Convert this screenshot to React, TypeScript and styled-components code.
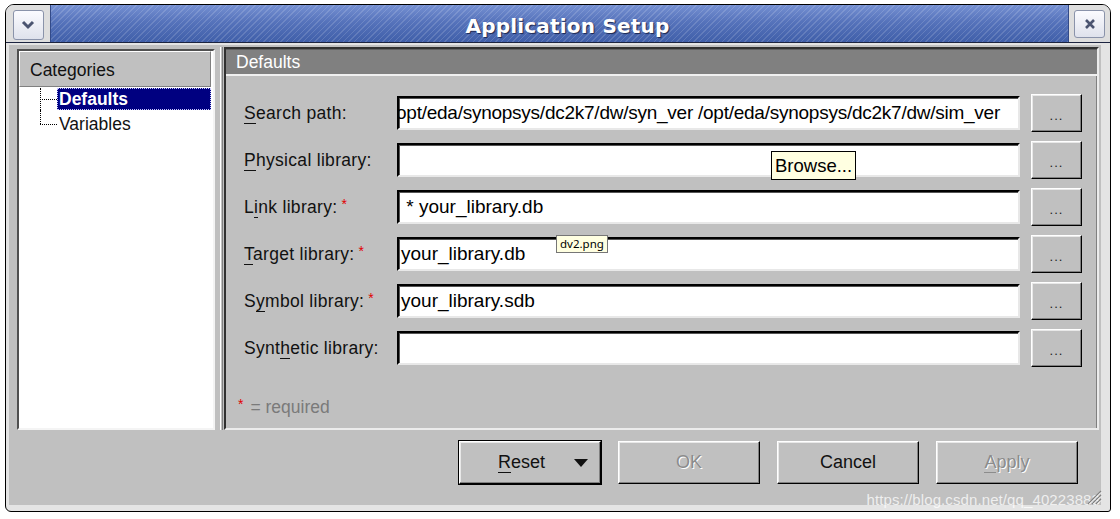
import React from "react";
import styled, { createGlobalStyle } from "styled-components";

const GlobalStyle = createGlobalStyle`
  html, body {
    margin: 0;
    padding: 0;
    background: #ffffff;
  }
  body {
    font-family: "Liberation Sans", Arial, sans-serif;
    color: #000;
  }
`;

const Window = styled.div`
  position: relative;
  box-sizing: border-box;
  width: 1106px;
  height: 508px;
  margin: 4px 0 0 5px;
  border: 1px solid #000;
  border-radius: 9px 9px 3px 6px;
  background: #e4e4e4;
  display: flex;
  flex-direction: column;
  overflow: hidden;
`;

const TitleBar = styled.div`
  height: 37px;
  display: flex;
  border-bottom: 1px solid #1c2440;
  background: #dedede;
`;

const TitleSide = styled.div<{ $w: number }>`
  width: ${(p) => p.$w}px;
  display: flex;
  align-items: flex-start;
  justify-content: center;
  padding-top: 5px;
  box-sizing: border-box;
`;

const FrameButton = styled.div<{ $w: number; $h: number }>`
  width: ${(p) => p.$w}px;
  height: ${(p) => p.$h}px;
  box-sizing: border-box;
  border: 1px solid #8a93aa;
  border-radius: 3px;
  background: linear-gradient(#fbfbff, #dfe2ec);
  display: flex;
  align-items: center;
  justify-content: center;
`;

const TitleArea = styled.div`
  flex: 1;
  display: flex;
  align-items: center;
  justify-content: center;
  padding: 5px 0 0 16px;
  background: repeating-linear-gradient(
      135deg,
      rgba(255, 255, 255, 0.14) 0 1px,
      transparent 1px 4px
    ),
    linear-gradient(#7590d2, #5673bb 45%, #405fa9);
  border-left: 1px solid #334a88;
  border-right: 1px solid #334a88;
`;

const Title = styled.span`
  font-family: "DejaVu Sans", Verdana, sans-serif;
  font-weight: bold;
  font-size: 20px;
  color: #ffffff;
  text-shadow: 1px 1px 1px #1b2650;
  letter-spacing: 0.2px;
`;

const Body = styled.div`
  flex: 1;
  margin: 2px 9px 6px 3px;
  background: #c0c0c0;
  padding: 2px 2px 0 8px;
  display: flex;
  flex-direction: column;
`;

const Main = styled.div`
  height: 383px;
  display: flex;
`;

const LeftPanel = styled.div`
  width: 198px;
  margin-top: 2px;
  box-sizing: border-box;
  border: 2px solid;
  border-color: #505050 #f4f4f4 #f4f4f4 #505050;
  background: #ffffff;
  display: flex;
  flex-direction: column;
`;

const ColumnHeader = styled.div`
  height: 36px;
  box-sizing: border-box;
  background: #c0c0c0;
  border: 1px solid;
  border-color: #ffffff #808080 #808080 #ffffff;
  display: flex;
  align-items: center;
  padding: 3px 0 0 10px;
  font-size: 17.5px;
  color: #111;
  margin-right: 2px;
`;

const Tree = styled.div`
  padding: 1px 2px 0 21px;
  display: flex;
  flex-direction: column;
`;

const TreeItem = styled.div<{ $h: number }>`
  height: ${(p) => p.$h}px;
  display: flex;
  align-items: stretch;
`;

const Connector = styled.div<{ $last?: boolean }>`
  position: relative;
  width: 17px;
  &::before {
    content: "";
    position: absolute;
    left: 0;
    top: 0;
    height: ${(p) => (p.$last ? "50%" : "100%")};
    border-left: 1px dotted #000;
  }
  &::after {
    content: "";
    position: absolute;
    left: 0;
    right: 0;
    top: 50%;
    border-top: 1px dotted #000;
  }
`;

const TreeLabel = styled.div<{ $selected?: boolean }>`
  flex: ${(p) => (p.$selected ? 1 : "none")};
  display: flex;
  align-items: center;
  padding-left: 2px;
  font-size: 17.5px;
  box-sizing: border-box;
  font-weight: ${(p) => (p.$selected ? "bold" : "normal")};
  color: ${(p) => (p.$selected ? "#ffffff" : "#111")};
  background: ${(p) => (p.$selected ? "#000080" : "transparent")};
  outline: ${(p) => (p.$selected ? "1px dotted #c8c8ff" : "none")};
  outline-offset: -1px;
`;

const Splitter = styled.div`
  width: 9px;
  display: flex;
  justify-content: flex-end;
  padding-right: 1px;
  box-sizing: border-box;
  &::before {
    content: "";
    width: 1px;
    background: #ffffff;
    margin-right: 1px;
  }
  &::after {
    content: "";
    width: 1px;
    background: #808080;
  }
`;

const RightPanel = styled.div`
  flex: 1;
  box-sizing: border-box;
  border: 2px solid;
  border-color: #303030 #ececec #ececec #303030;
  display: flex;
  flex-direction: column;
`;

const PanelHeader = styled.div`
  height: 24px;
  background: #808080;
  color: #ffffff;
  font-size: 17.5px;
  display: flex;
  align-items: center;
  padding-left: 10px;
  border-bottom: 2px solid #f0f0f0;
  border-top: 1px solid #606060;
`;

const Form = styled.div`
  flex: 1;
  padding: 18px 14px 0 18px;
  display: flex;
  flex-direction: column;
  gap: 9px;
  border-right: 1px solid #808080;
`;

const Row = styled.div`
  height: 38px;
  display: grid;
  grid-template-columns: 153px 1fr 51px;
  align-items: center;
`;

const Label = styled.div`
  font-size: 17.5px;
  letter-spacing: 0.3px;
  color: #111;
  white-space: nowrap;
  u {
    text-decoration: none;
    border-bottom: 1.5px solid #111;
  }
`;

const Star = styled.span`
  color: #e00000;
  font-size: 14px;
  vertical-align: 4px;
  margin-left: 4px;
`;

const Field = styled.div`
  position: relative;
  height: 34px;
  box-sizing: border-box;
  background: #ffffff;
  border: 2px solid;
  border-color: #000 #e8e8e8 #e8e8e8 #000;
  box-shadow: inset 1px 1px 0 #555;
  display: flex;
  align-items: center;
  margin-right: 11px;
`;

const FieldText = styled.div<{ $shift?: number; $tight?: boolean }>`
  overflow: hidden;
  white-space: pre;
  flex: 1;
  font-size: 19px;
  letter-spacing: ${(p) => (p.$tight ? "-0.25px" : "0")};
  color: #000;
  padding-left: 2px;
  span {
    display: inline-block;
    margin-left: ${(p) => p.$shift ?? 0}px;
  }
`;

const Raised = styled.div`
  box-sizing: border-box;
  background: #c0c0c0;
  border: 1px solid;
  border-color: #ffffff #000000 #000000 #ffffff;
  box-shadow: inset -1px -1px 0 #808080, inset 1px 1px 0 #e8e8e8;
  display: flex;
  align-items: center;
  justify-content: center;
`;

const DotsButton = styled(Raised)`
  height: 38px;
  font-size: 13px;
  letter-spacing: 1px;
  padding-top: 4px;
  color: #222;
`;

const Note = styled.div`
  margin: 21px 0 0 -6px;
  font-size: 17.5px;
  color: #7a7a7a;
  display: flex;
  align-items: center;
  span {
    color: #e00000;
    font-size: 14px;
    margin-right: 7px;
    position: relative;
    top: -4px;
  }
`;

const Tooltip = styled.div<{ $left: number; $top: number }>`
  position: absolute;
  left: ${(p) => p.$left}px;
  top: ${(p) => p.$top}px;
  background: #ffffe1;
  border: 1px solid #000;
  padding: 3px 3px 2px;
  font-size: 18.5px;
  white-space: nowrap;
  z-index: 2;
`;

const SmallTip = styled.div<{ $left: number; $top: number }>`
  position: absolute;
  left: ${(p) => p.$left}px;
  top: ${(p) => p.$top}px;
  background: #ffffe1;
  border: 1px solid #767676;
  padding: 0 3px;
  font-family: "Noto Sans", "DejaVu Sans", sans-serif;
  font-size: 11.5px;
  line-height: 16px;
  white-space: nowrap;
  z-index: 2;
`;

const ButtonRow = styled.div`
  margin-top: 11px;
  height: 43px;
  display: flex;
  justify-content: flex-end;
  gap: 17px;
  padding-right: 21px;
`;

const DialogButton = styled(Raised)<{ $disabled?: boolean; $default?: boolean }>`
  width: 142px;
  height: 43px;
  font-size: 18px;
  color: ${(p) => (p.$disabled ? "#8c8c8c" : "#111")};
  text-shadow: ${(p) => (p.$disabled ? "1px 1px 0 #ffffff" : "none")};
  outline: ${(p) => (p.$default ? "1px solid #000" : "none")};
  u {
    text-decoration: none;
    border-bottom: 1.5px solid currentColor;
  }
`;

const ResetInner = styled.div`
  width: 100%;
  display: flex;
  align-items: center;
  justify-content: space-between;
  padding: 0 12px 0 38px;
  box-sizing: border-box;
`;

const Watermark = styled.div`
  position: absolute;
  right: 10px;
  bottom: 3px;
  font-size: 15px;
  color: rgba(255, 255, 255, 0.75);
  letter-spacing: 0.1px;
`;

const Grip = styled.svg`
  position: absolute;
  right: 8px;
  bottom: 6px;
`;

const rows = [
  {
    label: <><u>S</u>earch path:</>,
    value: "opt/eda/synopsys/dc2k7/dw/syn_ver /opt/eda/synopsys/dc2k7/dw/sim_ver",
    shift: -5,
    tight: true,
  },
  { label: <><u>P</u>hysical library:</>, value: "" },
  { label: <>L<u>i</u>nk library:<Star>*</Star></>, value: "\u00a0* your_library.db" },
  { label: <><u>T</u>arget library:<Star>*</Star></>, value: "your_library.db" },
  { label: <>S<u>y</u>mbol library:<Star>*</Star></>, value: "your_library.sdb" },
  { label: <>Synt<u>h</u>etic library:</>, value: "" },
];

export default function App() {
  return (
    <>
      <GlobalStyle />
      <Window>
        <TitleBar>
          <TitleSide $w={44}>
            <FrameButton $w={31} $h={30}>
              <svg width="14" height="10" viewBox="0 0 14 10">
                <path d="M2 2 L7 7 L12 2" fill="none" stroke="#4b5470" strokeWidth="3" />
              </svg>
            </FrameButton>
          </TitleSide>
          <TitleArea>
            <Title>Application Setup</Title>
          </TitleArea>
          <TitleSide $w={41}>
            <FrameButton $w={31} $h={28}>
              <svg width="12" height="12" viewBox="0 0 12 12">
                <path d="M2 2 L10 10 M10 2 L2 10" stroke="#4b5470" strokeWidth="2.6" />
              </svg>
            </FrameButton>
          </TitleSide>
        </TitleBar>
        <Body>
          <Main>
            <LeftPanel>
              <ColumnHeader>Categories</ColumnHeader>
              <Tree>
                <TreeItem $h={22}>
                  <Connector />
                  <TreeLabel $selected>Defaults</TreeLabel>
                </TreeItem>
                <TreeItem $h={28}>
                  <Connector $last />
                  <TreeLabel>Variables</TreeLabel>
                </TreeItem>
              </Tree>
            </LeftPanel>
            <Splitter />
            <RightPanel>
              <PanelHeader>Defaults</PanelHeader>
              <Form>
                {rows.map((row, i) => (
                  <Row key={i}>
                    <Label>{row.label}</Label>
                    <Field>
                      <FieldText $shift={row.shift} $tight={row.tight}>
                        <span>{row.value}</span>
                      </FieldText>
                      {i === 1 && (
                        <Tooltip $left={372} $top={6}>
                          Browse...
                        </Tooltip>
                      )}
                      {i === 3 && (
                        <SmallTip $left={157} $top={-4}>
                          dv2.png
                        </SmallTip>
                      )}
                    </Field>
                    <DotsButton>...</DotsButton>
                  </Row>
                ))}
                <Note>
                  <span>*</span>= required
                </Note>
              </Form>
            </RightPanel>
          </Main>
          <ButtonRow>
            <DialogButton $default>
              <ResetInner>
                <span>
                  <u>R</u>eset
                </span>
                <svg width="14" height="8" viewBox="0 0 14 8">
                  <path d="M0 0 H14 L7 8 Z" fill="#111" />
                </svg>
              </ResetInner>
            </DialogButton>
            <DialogButton $disabled>OK</DialogButton>
            <DialogButton>Cancel</DialogButton>
            <DialogButton $disabled>
              <span>
                <u>A</u>pply
              </span>
            </DialogButton>
          </ButtonRow>
        </Body>
        <Watermark>https://blog.csdn.net/qq_40223883</Watermark>
        <Grip width="18" height="18" viewBox="0 0 18 18">
          <path
            d="M17 4 L4 17 M17 8 L8 17 M17 12 L12 17"
            stroke="#808080"
            strokeWidth="1.2"
          />
          <path
            d="M17 5.5 L5.5 17 M17 9.5 L9.5 17 M17 13.5 L13.5 17"
            stroke="#ffffff"
            strokeWidth="1"
          />
        </Grip>
      </Window>
    </>
  );
}
